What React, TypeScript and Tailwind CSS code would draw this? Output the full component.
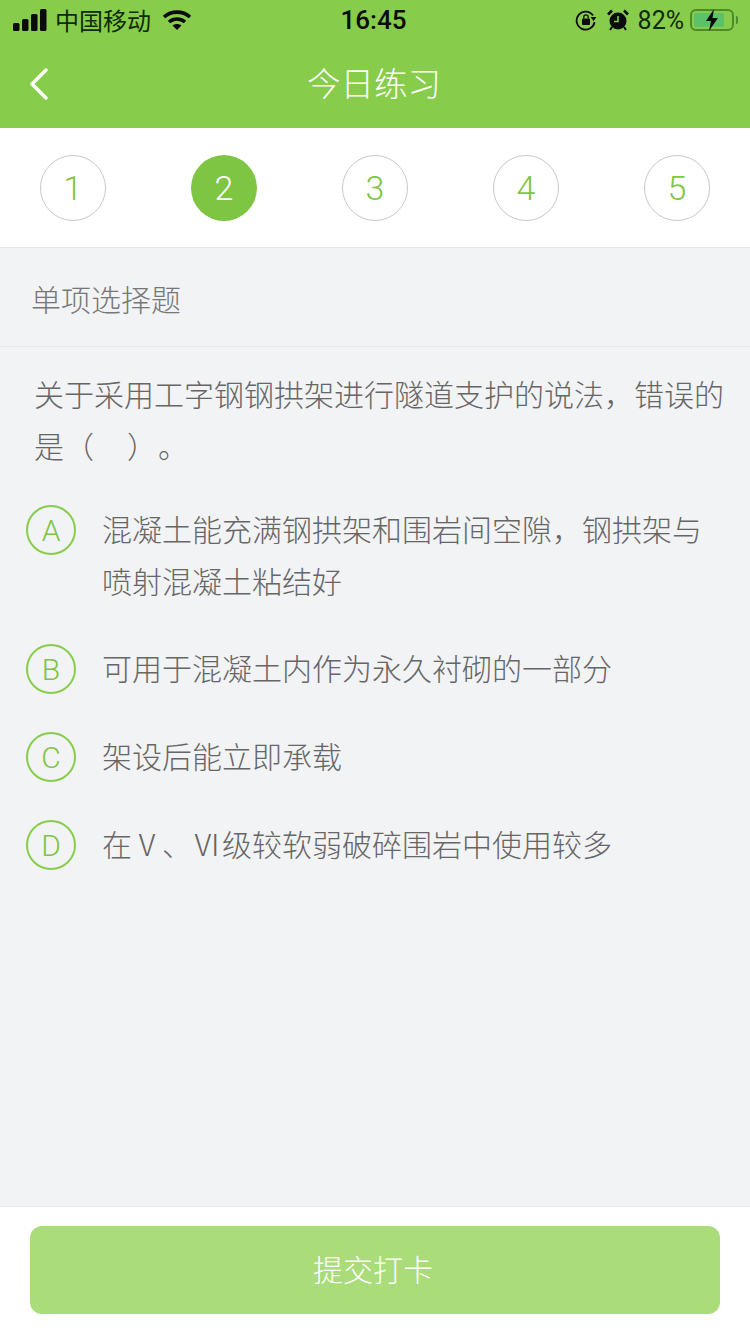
const CJK = "font-['PingFang_SC','Noto_Sans_CJK_SC',sans-serif]";

function Step({ n, active }: { n: number; active?: boolean }) {
  return (
    <div
      className={
        active
          ? "flex h-[66px] w-[66px] items-center justify-center rounded-full bg-[#7ec544] text-[34px] font-light text-white font-['Roboto',sans-serif]"
          : "flex h-[66px] w-[66px] items-center justify-center rounded-full border border-[#c9c9c9] bg-white text-[34px] font-light text-[#7ec544] font-['Roboto',sans-serif]"
      }
    >
      {n}
    </div>
  );
}

function Option({ letter, lines, className }: { letter: string; lines: string[]; className: string }) {
  return (
    <div className={`flex items-start ${className}`}>
      <div className="mt-[3px] flex h-[50px] w-[50px] shrink-0 items-center justify-center rounded-full border-2 border-[#88cd4c] text-[30px] font-light text-[#7ec544] font-['Roboto',sans-serif]">
        {letter}
      </div>
      <div className="ml-[26px] text-[30px] font-light leading-[52px] text-[#666666]">
        {lines.map((l) => (
          <div key={l} className="whitespace-nowrap">{l}</div>
        ))}
      </div>
    </div>
  );
}

export default function App() {
  return (
    <div className={`flex h-[1334px] w-[750px] flex-col overflow-hidden bg-[#f2f3f5] ${CJK}`}>
      <div className="bg-[#87cd4b]">
        <div className="flex h-[40px] items-center justify-between pl-[13px] pr-[12px] text-black">
          <div className="flex w-[250px] items-center">
            <svg width="34" height="22" viewBox="0 0 34 22" fill="#0b0b0b">
              <rect x="0" y="14" width="6.500" height="8" rx="1.500" />
              <rect x="9" y="10" width="6.500" height="12" rx="1.500" />
              <rect x="18" y="5" width="6.500" height="17" rx="1.500" />
              <rect x="27" y="0" width="6.500" height="22" rx="1.500" />
            </svg>
            <span className="ml-[8px] text-[24px] leading-none text-[#102a05]">中国移动</span>
            <svg className="ml-[11px]" width="30" height="22" viewBox="0 0 30 22" fill="none" stroke="#0b0b0b" strokeWidth="3.600">
              <path d="M2 8c7.500-6.500 18.500-6.500 26 0" />
              <path d="M7 13c4.500-4 11.500-4 16 0" />
              <path d="M15 21l-4.500-4.500c2.500-2 6.500-2 9 0z" fill="#0b0b0b" stroke="none" />
            </svg>
          </div>
          <span className="mr-[4px] text-[26px] font-medium leading-none text-[#0b0b0b] font-['Roboto',sans-serif]">16:45</span>
          <div className="flex w-[250px] items-center justify-end">
            <svg width="22" height="22" viewBox="0 0 22 22" fill="none">
              <path d="M18 6.500A9 9 0 1 0 19.500 13" stroke="#0b0b0b" strokeWidth="1.800" />
              <path d="M15.500 8h6l-3 4z" fill="#0b0b0b" />
              <rect x="7" y="9.500" width="8" height="6.500" rx="1" fill="#0b0b0b" />
              <path d="M8.800 9.500V8a2.200 2.200 0 0 1 4.400 0v1.500" stroke="#0b0b0b" strokeWidth="1.300" />
            </svg>
            <svg className="ml-[10px]" width="22" height="22" viewBox="0 0 22 22">
              <circle cx="11" cy="12" r="8.500" fill="#0b0b0b" />
              <path d="M11 7v5.500H7" stroke="#87cd4b" strokeWidth="1.600" fill="none" />
              <path d="M1 5.500L5 1.500M21 5.500L17 1.500" stroke="#0b0b0b" strokeWidth="2.600" />
              <path d="M5 18l-2 3M17 18l2 3" stroke="#0b0b0b" strokeWidth="2" />
            </svg>
            <span className="ml-[9px] text-[25px] leading-none text-[#102a05] font-['Roboto',sans-serif]">82%</span>
            <div className="relative ml-[6px] flex h-[22px] w-[44px] items-center rounded-[6px] border-2 border-[#4f8a2a] p-[2px]">
              <div className="h-full w-[82%] rounded-[2px] bg-[#5cc26a]" />
              <svg className="absolute left-[12px] top-[-2px]" width="16" height="22" viewBox="0 0 16 22" fill="#0b0b0b">
                <path d="M10 0L2 12h5l-2 10 9-13H8.500z" />
              </svg>
            </div>
            <div className="ml-[2px] h-[8px] w-[2px] rounded-r bg-[#4f8a2a]" />
          </div>
        </div>
        <div className="relative flex h-[88px] items-center justify-center">
          <svg className="absolute left-[29px] top-[28px]" width="20" height="32" viewBox="0 0 20 32" fill="none" stroke="#fff" strokeWidth="3.400" strokeLinecap="round" strokeLinejoin="round">
            <path d="M17 2L3 16l14 14" />
          </svg>
          <span className="mt-[-5px] mr-[2px] text-[33.500px] font-light leading-none text-white">今日练习</span>
        </div>
      </div>

      <div className="flex h-[120px] items-center justify-between border-b border-[#e7e7e7] bg-white px-[40px] pt-[1px]">
        <Step n={1} />
        <Step n={2} active />
        <Step n={3} />
        <Step n={4} />
        <Step n={5} />
      </div>

      <div className="flex h-[99px] items-center border-b border-[#e6e7e9] pl-[31px] pt-[2px] text-[30px] font-light text-[#777777]">
        单项选择题
      </div>

      <div className="flex-1 pt-[20px]">
        <div className="pl-[34px] text-[30px] font-light leading-[52px] text-[#666666]">
          <div className="whitespace-nowrap">关于采用工字钢钢拱架进行隧道支护的说法，错误的</div>
          <div className="flex whitespace-nowrap">
            <span>是（</span>
            <span className="ml-[33px]">）</span>
            <span className="ml-[1px]">。</span>
          </div>
        </div>
        <div className="pl-[26px]">
          <Option className="mt-[31px]" letter="A" lines={["混凝土能充满钢拱架和围岩间空隙，钢拱架与", "喷射混凝土粘结好"]} />
          <Option className="mt-[35px]" letter="B" lines={["可用于混凝土内作为永久衬砌的一部分"]} />
          <Option className="mt-[35px]" letter="C" lines={["架设后能立即承载"]} />
          <Option className="mt-[35px]" letter="D" lines={["在Ⅴ、Ⅵ级较软弱破碎围岩中使用较多"]} />
        </div>
      </div>

      <div className="h-[128px] border-t border-[#e8e9eb] bg-white px-[30px] pt-[19px]">
        <div className="flex h-[88px] items-center justify-center rounded-[12px] bg-[#aadc7a] pb-[4px] pr-[4px] text-[30px] font-light text-white">
          提交打卡
        </div>
      </div>
    </div>
  );
}
